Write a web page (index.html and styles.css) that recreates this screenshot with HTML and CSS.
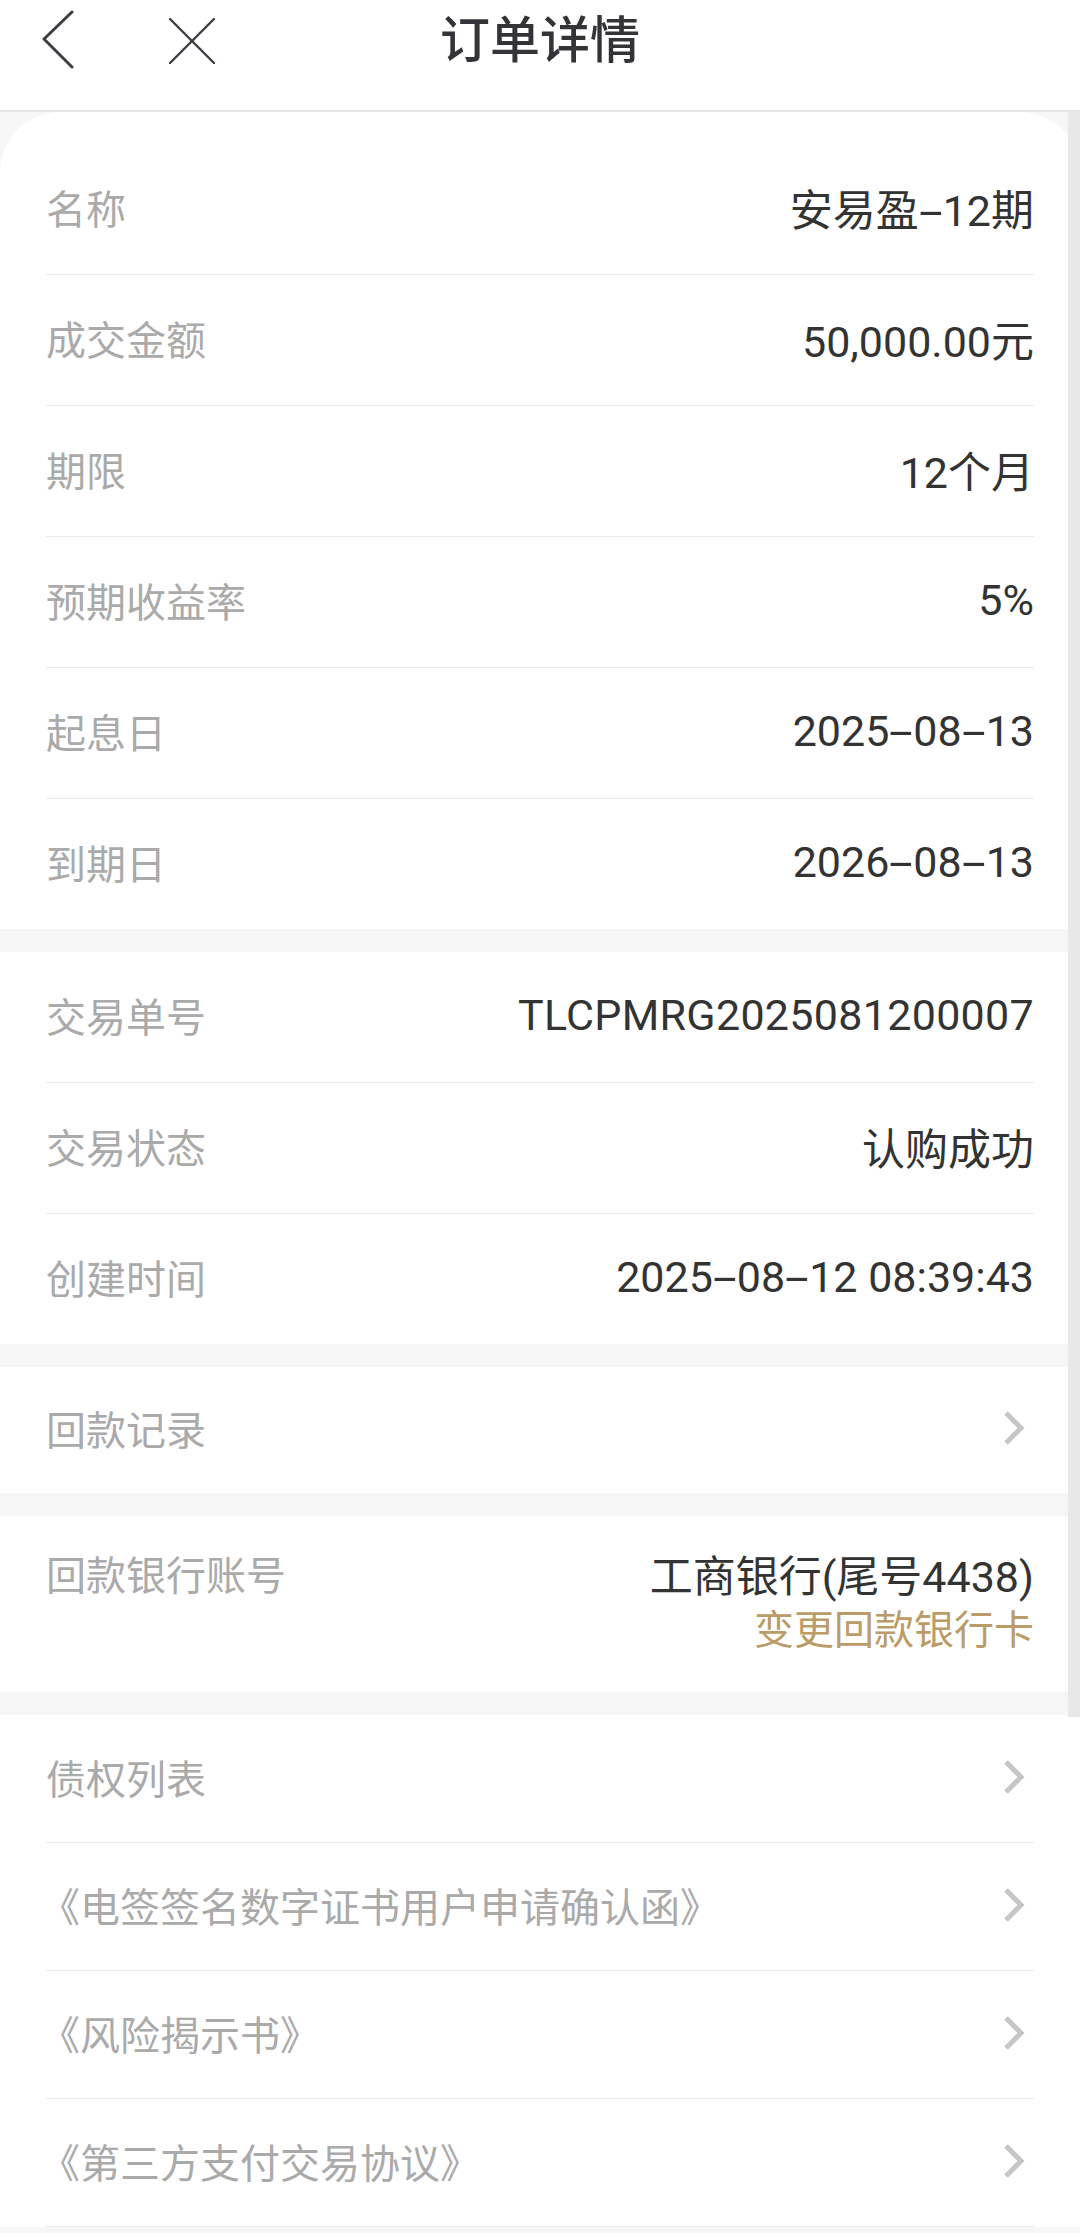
FILE: index.html
```html
<!DOCTYPE html>
<html lang="zh-CN">
<head>
  <meta charset="UTF-8">
  <meta name="viewport" content="width=device-width, initial-scale=1.0">
  <title>订单详情</title>
  <link rel="stylesheet" href="styles.css">
</head>
<body>
  <div id="header">
    <div class="nav-left">
      <svg class="icon-back" width="32" height="60" viewBox="0 0 32 60">
        <polyline points="30,2 2,29 30,57" fill="none" stroke="#3c3c44" stroke-width="3" stroke-linecap="round" stroke-linejoin="round"/>
      </svg>
      <svg class="icon-close" width="46" height="46" viewBox="0 0 46 46">
        <line x1="1" y1="1" x2="45" y2="45" stroke="#3c3c44" stroke-width="2.4" stroke-linecap="round"/>
        <line x1="45" y1="1" x2="1" y2="45" stroke="#3c3c44" stroke-width="2.4" stroke-linecap="round"/>
      </svg>
    </div>
    <h1 class="title">订单详情</h1>
    <div></div>
  </div>

  <div id="page">
    <div class="section first">
      <div class="row"><span class="label">名称</span><span class="value">安易盈<span class="dash">-</span>12期</span></div>
      <div class="row"><span class="label">成交金额</span><span class="value">50,000.00元</span></div>
      <div class="row"><span class="label">期限</span><span class="value">12个月</span></div>
      <div class="row"><span class="label">预期收益率</span><span class="value">5%</span></div>
      <div class="row"><span class="label">起息日</span><span class="value">2025<span class="dash">-</span>08<span class="dash">-</span>13</span></div>
      <div class="row"><span class="label">到期日</span><span class="value">2026<span class="dash">-</span>08<span class="dash">-</span>13</span></div>
    </div>

    <div class="section">
      <div class="row"><span class="label">交易单号</span><span class="value id">TLCPMRG2025081200007</span></div>
      <div class="row"><span class="label">交易状态</span><span class="value">认购成功</span></div>
      <div class="row"><span class="label">创建时间</span><span class="value">2025<span class="dash">-</span>08<span class="dash">-</span>12 08:39:43</span></div>
    </div>

    <div class="section">
      <div class="row link short"><span class="label">回款记录</span>
        <svg class="chevron" width="24" height="36" viewBox="0 0 24 36"><polyline points="4,3 19,18 4,33" fill="none" stroke="#c6c6c6" stroke-width="5"/></svg>
      </div>
    </div>

    <div class="section">
      <div class="row bank">
        <span class="label">回款银行账号</span>
        <div class="bank-info">
          <span class="value">工商银行(尾号4438)</span>
          <span class="change">变更回款银行卡</span>
        </div>
      </div>
    </div>

    <div class="section">
      <div class="row link lined"><span class="label">债权列表</span>
        <svg class="chevron" width="24" height="36" viewBox="0 0 24 36"><polyline points="4,3 19,18 4,33" fill="none" stroke="#c6c6c6" stroke-width="5"/></svg>
      </div>
      <div class="row link lined"><span class="label doc">《电签签名数字证书用户申请确认函》</span>
        <svg class="chevron" width="24" height="36" viewBox="0 0 24 36"><polyline points="4,3 19,18 4,33" fill="none" stroke="#c6c6c6" stroke-width="5"/></svg>
      </div>
      <div class="row link lined"><span class="label doc">《风险揭示书》</span>
        <svg class="chevron" width="24" height="36" viewBox="0 0 24 36"><polyline points="4,3 19,18 4,33" fill="none" stroke="#c6c6c6" stroke-width="5"/></svg>
      </div>
      <div class="row link lined"><span class="label doc">《第三方支付交易协议》</span>
        <svg class="chevron" width="24" height="36" viewBox="0 0 24 36"><polyline points="4,3 19,18 4,33" fill="none" stroke="#c6c6c6" stroke-width="5"/></svg>
      </div>
    </div>

    <div class="scrollbar"></div>
  </div>
</body>
</html>
```

FILE: styles.css
```css
body {
  margin: 0;
  width: 1080px;
  background: #f6f6f6;
  font-family: Roboto, "Noto Sans CJK SC", sans-serif;
  overflow: hidden;
}

#header {
  height: 82px;
  padding-bottom: 28px;
  background: #fff;
  border-bottom: 2px solid #e6e6e6;
  display: grid;
  grid-template-columns: 1fr auto 1fr;
  align-items: center;
}

.nav-left {
  display: flex;
  align-items: center;
  padding-left: 42px;
  gap: 95px;
}

.icon-back {
  margin-top: -2px;
}

.title {
  margin: 0;
  font-size: 50px;
  font-weight: 500;
  color: #333338;
  line-height: 60px;
}

#page {
  position: relative;
}

.section {
  background: #fff;
  padding: 0 46px;
  margin-bottom: 23px;
}

.section.first {
  border-radius: 60px 60px 0 0;
  padding-top: 32px;
}

.row {
  height: 126px;
  padding-bottom: 4px;
  display: flex;
  align-items: center;
  justify-content: space-between;
  border-bottom: 1px solid #ebebeb;
  font-size: 40px;
}

.section .row:last-child {
  border-bottom: none;
}

.row.short {
  height: 122px;
}

.row.lined {
  height: 123px;
}

.section .row.lined:last-child {
  border-bottom: 1px solid #ebebeb;
}

.label {
  color: #aaaaaa;
}

.label.doc {
  margin-left: -6px;
}

.value {
  color: #333333;
  font-size: 43px;
}

.value.id {
  letter-spacing: 0.3px;
}

/* the app font draws a wide dash */
.dash {
  display: inline-block;
  width: 24px;
  text-align: center;
  transform: scaleX(2);
}

.chevron {
  margin-right: 8px;
}

.row.bank {
  height: auto;
  padding: 34px 0;
  align-items: flex-start;
  line-height: 54px;
}

.bank-info {
  display: flex;
  flex-direction: column;
  align-items: flex-end;
}

.change {
  color: #bb9c68;
}

.scrollbar {
  position: absolute;
  top: 0;
  right: 0;
  width: 12px;
  height: 1605px;
  background: #e8e8e8;
}
```
